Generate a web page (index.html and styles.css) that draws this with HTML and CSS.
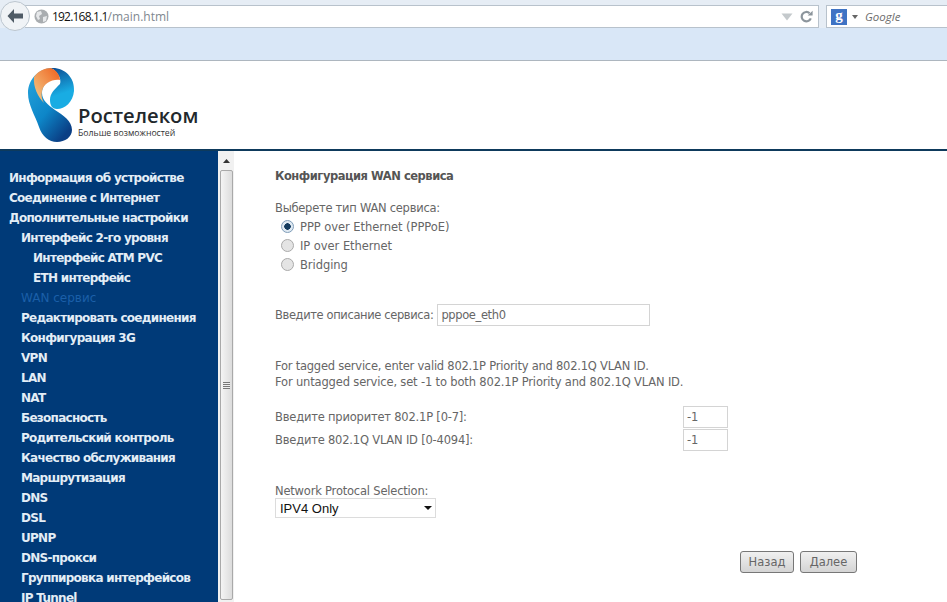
FILE: index.html
```html
<!DOCTYPE html>
<html lang="en">
<head>
    <meta charset="UTF-8">
    <meta name="viewport" content="width=device-width, initial-scale=1.0">
    <title>Ростелеком</title>
    <link rel="stylesheet" href="styles.css">
</head>
<body>
    <div class="browser-bar">
        <div class="back-btn">
            <svg width="20" height="18" viewBox="0 0 20 18"><path d="M9 2 L2.5 9 L9 16 L9 11.5 L18 11.5 L18 6.5 L9 6.5 Z" fill="#4f5b66"/></svg>
        </div>
        <div class="address">
            <svg class="globe" width="15" height="15" viewBox="0 0 15 15"><circle cx="7.5" cy="7.5" r="7" fill="#a9adb0"/><path d="M3 3 L7 2 L8 5 L5 7 L6 10 L4 11 L2 7 Z M9 8 L13 7 L12 12 L9 13 Z" fill="#e6e8ea"/></svg>
            <span class="url"><span class="url-host">192.168.1.1</span>/main.html</span>
            <svg class="url-drop" width="12" height="8" viewBox="0 0 12 8"><path d="M0.5 0.5 H11.5 L6 7.5 Z" fill="#c4c9cc"/></svg>
            <svg class="reload" width="13" height="13" viewBox="0 0 13 13"><path d="M10.8 8.4 A4.7 4.7 0 1 1 9.6 3.2" fill="none" stroke="#8c959c" stroke-width="2.2"/><path d="M7.6 5.6 H12.6 V0.8 Z" fill="#8c959c"/></svg>
        </div>
        <div class="search">
            <span class="g-badge">g</span>
            <svg width="6" height="4" viewBox="0 0 6 4"><path d="M0 0 H6 L3 4 Z" fill="#666"/></svg>
            <span class="search-name">Google</span>
        </div>
    </div>
    <div class="bookmarks"></div>

    <header class="top">
        <svg class="logo" width="52" height="76" viewBox="0 0 52 76">
            <defs>
                <linearGradient id="blue" x1="0" y1="0" x2="0.7" y2="1">
                    <stop offset="0" stop-color="#29a7de"/>
                    <stop offset="0.6" stop-color="#0d86c8"/>
                    <stop offset="1" stop-color="#0a3f85"/>
                </linearGradient>
                <linearGradient id="orange" x1="0" y1="1" x2="1" y2="0">
                    <stop offset="0" stop-color="#f4d08c"/>
                    <stop offset="1" stop-color="#ee5f1c"/>
                </linearGradient>
                <linearGradient id="top-blue" x1="0" y1="0" x2="0.2" y2="1">
                    <stop offset="0" stop-color="#0b4a90"/>
                    <stop offset="0.7" stop-color="#19ace3"/>
                </linearGradient>
            </defs>
            <path d="M26 1 C12 1 1 12 1 26 C1 38 8 48 12 60 C15 69 22 75 30 75 C38 75 45 70 45 63 C45 54 36 48 28 43 C21 38 15 33 15 26 C15 20 19 14 26 12 Z" fill="url(#blue)"/>
            <path d="M24 1 C37 0 48 10 47 24 C46 35 38 42 30 42 C25 42 23 38 23 33 C23 26 28 22 33 17 C35 12 30 4 24 1 Z" fill="url(#top-blue)"/>
            <path d="M7 10 C11 4 18 1 24 1 C29 3 33 8 33 13 C25 12 17 16 15 24 C14 29 15 33 17 36 C11 30 6 20 7 10 Z" fill="url(#orange)"/>
        </svg>
        <div class="brand">
            <div class="brand-name">Ростелеком</div>
            <div class="brand-slogan">Больше возможностей</div>
        </div>
    </header>

    <div class="content">
        <nav class="sidebar">
            <a href="#">Информация об устройстве</a>
            <a href="#">Соединение с Интернет</a>
            <a href="#">Дополнительные настройки</a>
            <a href="#" class="lvl2">Интерфейс 2-го уровня</a>
            <a href="#" class="lvl3">Интерфейс ATM PVC</a>
            <a href="#" class="lvl3">ETH интерфейс</a>
            <a href="#" class="lvl2 current">WAN сервис</a>
            <a href="#" class="lvl2">Редактировать соединения</a>
            <a href="#" class="lvl2">Конфигурация 3G</a>
            <a href="#" class="lvl2">VPN</a>
            <a href="#" class="lvl2">LAN</a>
            <a href="#" class="lvl2">NAT</a>
            <a href="#" class="lvl2">Безопасность</a>
            <a href="#" class="lvl2">Родительский контроль</a>
            <a href="#" class="lvl2">Качество обслуживания</a>
            <a href="#" class="lvl2">Маршрутизация</a>
            <a href="#" class="lvl2">DNS</a>
            <a href="#" class="lvl2">DSL</a>
            <a href="#" class="lvl2">UPNP</a>
            <a href="#" class="lvl2">DNS-прокси</a>
            <a href="#" class="lvl2">Группировка интерфейсов</a>
            <a href="#" class="lvl2">IP Tunnel</a>
        </nav>

        <div class="scrollbar">
            <svg class="scroll-up" width="7" height="4" viewBox="0 0 7 4"><path d="M3.5 0 L7 4 H0 Z" fill="#333"/></svg>
            <div class="scroll-thumb"><span class="grip"></span></div>
        </div>

        <main class="main">
            <h2 class="title">Конфигурация WAN сервиса</h2>

            <p class="lead">Выберете тип WAN сервиса:</p>
            <div class="radios">
                <label class="radio-row"><span class="radio checked"></span>PPP over Ethernet (PPPoE)</label>
                <label class="radio-row"><span class="radio"></span>IP over Ethernet</label>
                <label class="radio-row"><span class="radio"></span>Bridging</label>
            </div>

            <div class="desc-row">
                <span>Введите описание сервиса:</span>
                <input class="field desc-input" type="text" value="pppoe_eth0">
            </div>

            <div class="note">
                <p class="note-tagged">For tagged service, enter valid 802.1P Priority and 802.1Q VLAN ID.</p>
                <p>For untagged service, set -1 to both 802.1P Priority and 802.1Q VLAN ID.</p>
            </div>

            <div class="vlan-row first">
                <span>Введите приоритет 802.1P [0-7]:</span>
                <input class="field vlan-input" type="text" value="-1">
            </div>
            <div class="vlan-row">
                <span>Введите 802.1Q VLAN ID [0-4094]:</span>
                <input class="field vlan-input" type="text" value="-1">
            </div>

            <div class="proto-label">Network Protocal Selection:</div>
            <div class="select">
                <span>IPV4 Only</span>
                <svg width="8" height="4" viewBox="0 0 8 4"><path d="M0 0 H8 L4 4 Z" fill="#111"/></svg>
            </div>

            <div class="buttons">
                <button type="button">Назад</button>
                <button type="button" class="next">Далее</button>
            </div>
        </main>
    </div>
</body>
</html>
```

FILE: styles.css
```css
:root {
    --menu-color: #003a78;
    --text-color: #666;
    --field-border: #d4d4d4;
}

html, body {
    height: 100%;
}

body {
    margin: 0;
    height: 602px;
    overflow: hidden;
    background: white;
    color: var(--text-color);
    font-family: 'DejaVu Sans', sans-serif;
    font-size: 12px;
}

/* browser chrome */
.browser-bar {
    height: 28px;
    background: #e6edf5;
    display: flex;
    align-items: flex-start;
    box-sizing: border-box;
    padding-top: 5px;
}

.back-btn {
    width: 30px;
    height: 30px;
    margin-top: -4px;
    border-radius: 50%;
    border: 1px solid #bcc6cf;
    background: #f0f3f6;
    display: flex;
    align-items: center;
    justify-content: center;
    flex: none;
    z-index: 1;
    box-sizing: border-box;
}

.address {
    width: 794px;
    margin-left: -5px;
    height: 23px;
    background: white;
    border: 1px solid #b8c2cc;
    border-left: none;
    display: flex;
    align-items: center;
    padding-left: 9px;
    box-sizing: border-box;
    flex: none;
}

.url {
    margin-left: 3px;
    font-family: 'Open Sans', sans-serif;
    font-size: 12px;
    color: #80888f;
    flex: 1;
}

.url-host {
    color: #111;
    letter-spacing: -0.8px;
}

.url-drop {
    margin-right: 7px;
}

.reload {
    margin-right: 5px;
}

.search {
    margin-left: 7px;
    flex: 1;
    height: 23px;
    background: white;
    border: 1px solid #b8c2cc;
    border-right: none;
    display: flex;
    align-items: center;
    padding-left: 4px;
    gap: 5px;
    box-sizing: border-box;
}

.g-badge {
    width: 16px;
    height: 16px;
    background: #3f73c4;
    color: white;
    font: bold 15px 'Liberation Serif', serif;
    text-align: center;
    line-height: 13px;
}

.search-name {
    font-family: 'Open Sans', sans-serif;
    font-style: italic;
    font-size: 11.5px;
    color: #6c6c6c;
    margin-left: 2px;
}

.bookmarks {
    height: 32px;
    background: #d9e7f7;
    border-bottom: 1px solid #adb6bf;
}

/* page header */
.top {
    height: 88px;
    display: flex;
    padding-left: 27px;
    background: white;
    border-bottom: 2px solid #0e3a5c;
}

.logo {
    margin-top: 6px;
}

.brand {
    margin-left: -1px;
    margin-top: 42px;
}

.brand-name {
    font-family: 'Open Sans', sans-serif;
    font-weight: 600;
    font-size: 20.2px;
    line-height: 24px;
    color: #22282c;
}

.brand-slogan {
    font-family: 'Open Sans', sans-serif;
    font-size: 8.7px;
    line-height: 12px;
    color: #333;
}

/* left menu */
.content {
    display: flex;
    height: 451px;
    overflow: hidden;
}

.sidebar {
    width: 218px;
    flex: none;
    background: var(--menu-color);
    padding-top: 17px;
    box-sizing: border-box;
}

.sidebar a {
    display: block;
    height: 20px;
    line-height: 20px;
    padding-left: 9px;
    color: #e3edf6;
    font-weight: bold;
    font-size: 12px;
    font-family: 'DejaVu Sans', sans-serif;
    letter-spacing: -0.72px;
    text-decoration: none;
    white-space: nowrap;
}

.sidebar a.lvl2 {
    padding-left: 21px;
}

.sidebar a.lvl3 {
    padding-left: 33px;
}

.sidebar a.current {
    color: #1b5fa8;
    font-weight: normal;
    letter-spacing: 0;
}

.scrollbar {
    width: 16px;
    flex: none;
    background: #f1f1f1;
}

.scroll-up {
    display: block;
    margin: 8px auto 0;
}

.scroll-thumb {
    margin: 7px 1px 0 2px;
    height: 428px;
    border: 1px solid #a9a9a9;
    border-radius: 2px;
    background: linear-gradient(to right, #f4f4f4, #dcdcdc);
    display: flex;
    align-items: center;
    justify-content: center;
}

.grip {
    width: 7px;
    height: 7px;
    background: repeating-linear-gradient(to bottom, #777 0, #777 1px, #eee 1px, #eee 2px);
}

/* form */
.main {
    flex: 1;
    padding: 18px 0 0 41px;
    font-family: 'DejaVu Sans', sans-serif;
    letter-spacing: -0.2px;
    font-size: 11.5px;
}

.title {
    margin: 0;
    font-size: 11.5px;
    line-height: 14px;
    letter-spacing: -0.47px;
    color: #555;
}

.lead {
    margin: 18px 0 0;
    line-height: 14px;
    letter-spacing: -0.26px;
}

.radios {
    margin-top: 2px;
    padding-left: 6px;
    letter-spacing: -0.05px;
}

.radio-row {
    display: flex;
    align-items: center;
    height: 19px;
}

.radio {
    width: 11px;
    height: 11px;
    border-radius: 50%;
    border: 1px solid #aaa;
    background: #e4e4e4;
    margin-right: 6px;
    box-sizing: content-box;
}

.radio.checked {
    background: radial-gradient(circle, #123a5e 0, #123a5e 3px, #dfe9f2 3.5px);
    border-color: #7f9db9;
}

.desc-row {
    display: flex;
    align-items: center;
    margin-top: 30px;
    gap: 4px;
    letter-spacing: -0.38px;
}

.field {
    box-sizing: border-box;
    border: 1px solid var(--field-border);
    padding: 0 3px;
    color: var(--text-color);
    font: inherit;
    letter-spacing: inherit;
    background: white;
    outline: none;
}

.desc-input {
    width: 213px;
    height: 22px;
}

.note {
    margin-top: 32px;
    line-height: 16px;
    letter-spacing: -0.16px;
}

.note p {
    margin: 0;
}

.note .note-tagged {
    letter-spacing: -0.235px;
}

.vlan-row {
    display: flex;
    align-items: center;
    justify-content: space-between;
    width: 453px;
    margin-bottom: 1px;
}

.vlan-row.first {
    margin-top: 16px;
}

.vlan-input {
    width: 45px;
    height: 22px;
}

.proto-label {
    margin-top: 33px;
    line-height: 14px;
}

.select {
    width: 161px;
    height: 20px;
    box-sizing: border-box;
    border: 1px solid #dcdcdc;
    display: flex;
    align-items: center;
    justify-content: space-between;
    padding: 0 3px 0 4px;
    font-family: 'Liberation Sans', sans-serif;
    font-size: 13px;
    letter-spacing: 0;
    color: #111;
}

.buttons {
    display: flex;
    gap: 6px;
    margin: 33px 0 0 465px;
}

.buttons button {
    width: 54px;
    height: 22px;
    padding: 0;
    border: 1px solid #777;
    border-radius: 3px;
    background: linear-gradient(to bottom, #f0f0f0, #d4d4d4);
    color: #666;
    font: inherit;
}

.buttons .next {
    width: 57px;
}
```
